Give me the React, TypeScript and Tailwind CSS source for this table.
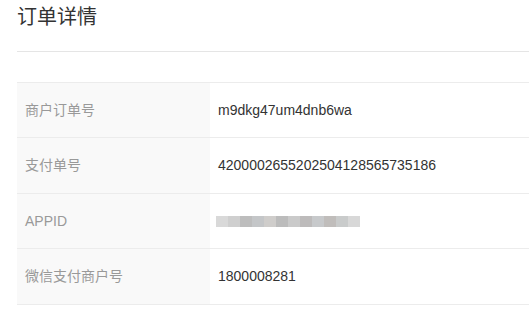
const ROWS: { label: string; value: string; h: string; blur?: boolean }[] = [
  { label: "商户订单号", value: "m9dkg47um4dnb6wa", h: "h-[55px]" },
  { label: "支付单号", value: "4200002655202504128565735186", h: "h-[56px]" },
  { label: "APPID", value: "", h: "h-[55px]", blur: true },
  { label: "微信支付商户号", value: "1800008281", h: "h-[56px]" },
];

const BLUR_BLOCKS = [
  "bg-[#d9d9d9]",
  "bg-[#cfcfcf]",
  "bg-[#bdbdbd]",
  "bg-[#c4c6c8]",
  "bg-[#cfcdcb]",
  "bg-[#bcbcbc]",
  "bg-[#cacaca]",
  "bg-[#bdbbbb]",
  "bg-[#c7c9cb]",
  "bg-[#c0bdbb]",
  "bg-[#c9cbcb]",
  "bg-[#d8d8d8]",
];

export default function App() {
  return (
    <div
      className="min-h-[311px] w-[529px] overflow-hidden bg-white pl-[17px]"
      style={{ fontFamily: '"Liberation Sans", Arial, "Noto Sans CJK SC", sans-serif' }}
    >
      <div className="flex h-[52px] items-start border-b border-[#e5e5e5] pt-[3px]">
        <h1 className="text-[20px] leading-[28px] text-[#333]">订单详情</h1>
      </div>

      <div className="mt-[30px] border-t border-[#ececec]">
        {ROWS.map((row) => (
          <div key={row.label} className={`flex border-b border-[#ececec] ${row.h}`}>
            <div className="flex w-[193px] shrink-0 items-center bg-[#f9f9f9] pl-[8px] text-[14px] text-[#999]">
              {row.label}
            </div>
            <div className="flex flex-1 items-center pl-[8px] text-[14px] text-[#333]">
              {row.blur ? (
                <div className="-ml-[2px] flex h-[11px] blur-[0.5px]">
                  {BLUR_BLOCKS.map((c, i) => (
                    <span key={i} className={`h-full w-[12px] ${c}`} />
                  ))}
                </div>
              ) : (
                row.value
              )}
            </div>
          </div>
        ))}
      </div>
    </div>
  );
}
